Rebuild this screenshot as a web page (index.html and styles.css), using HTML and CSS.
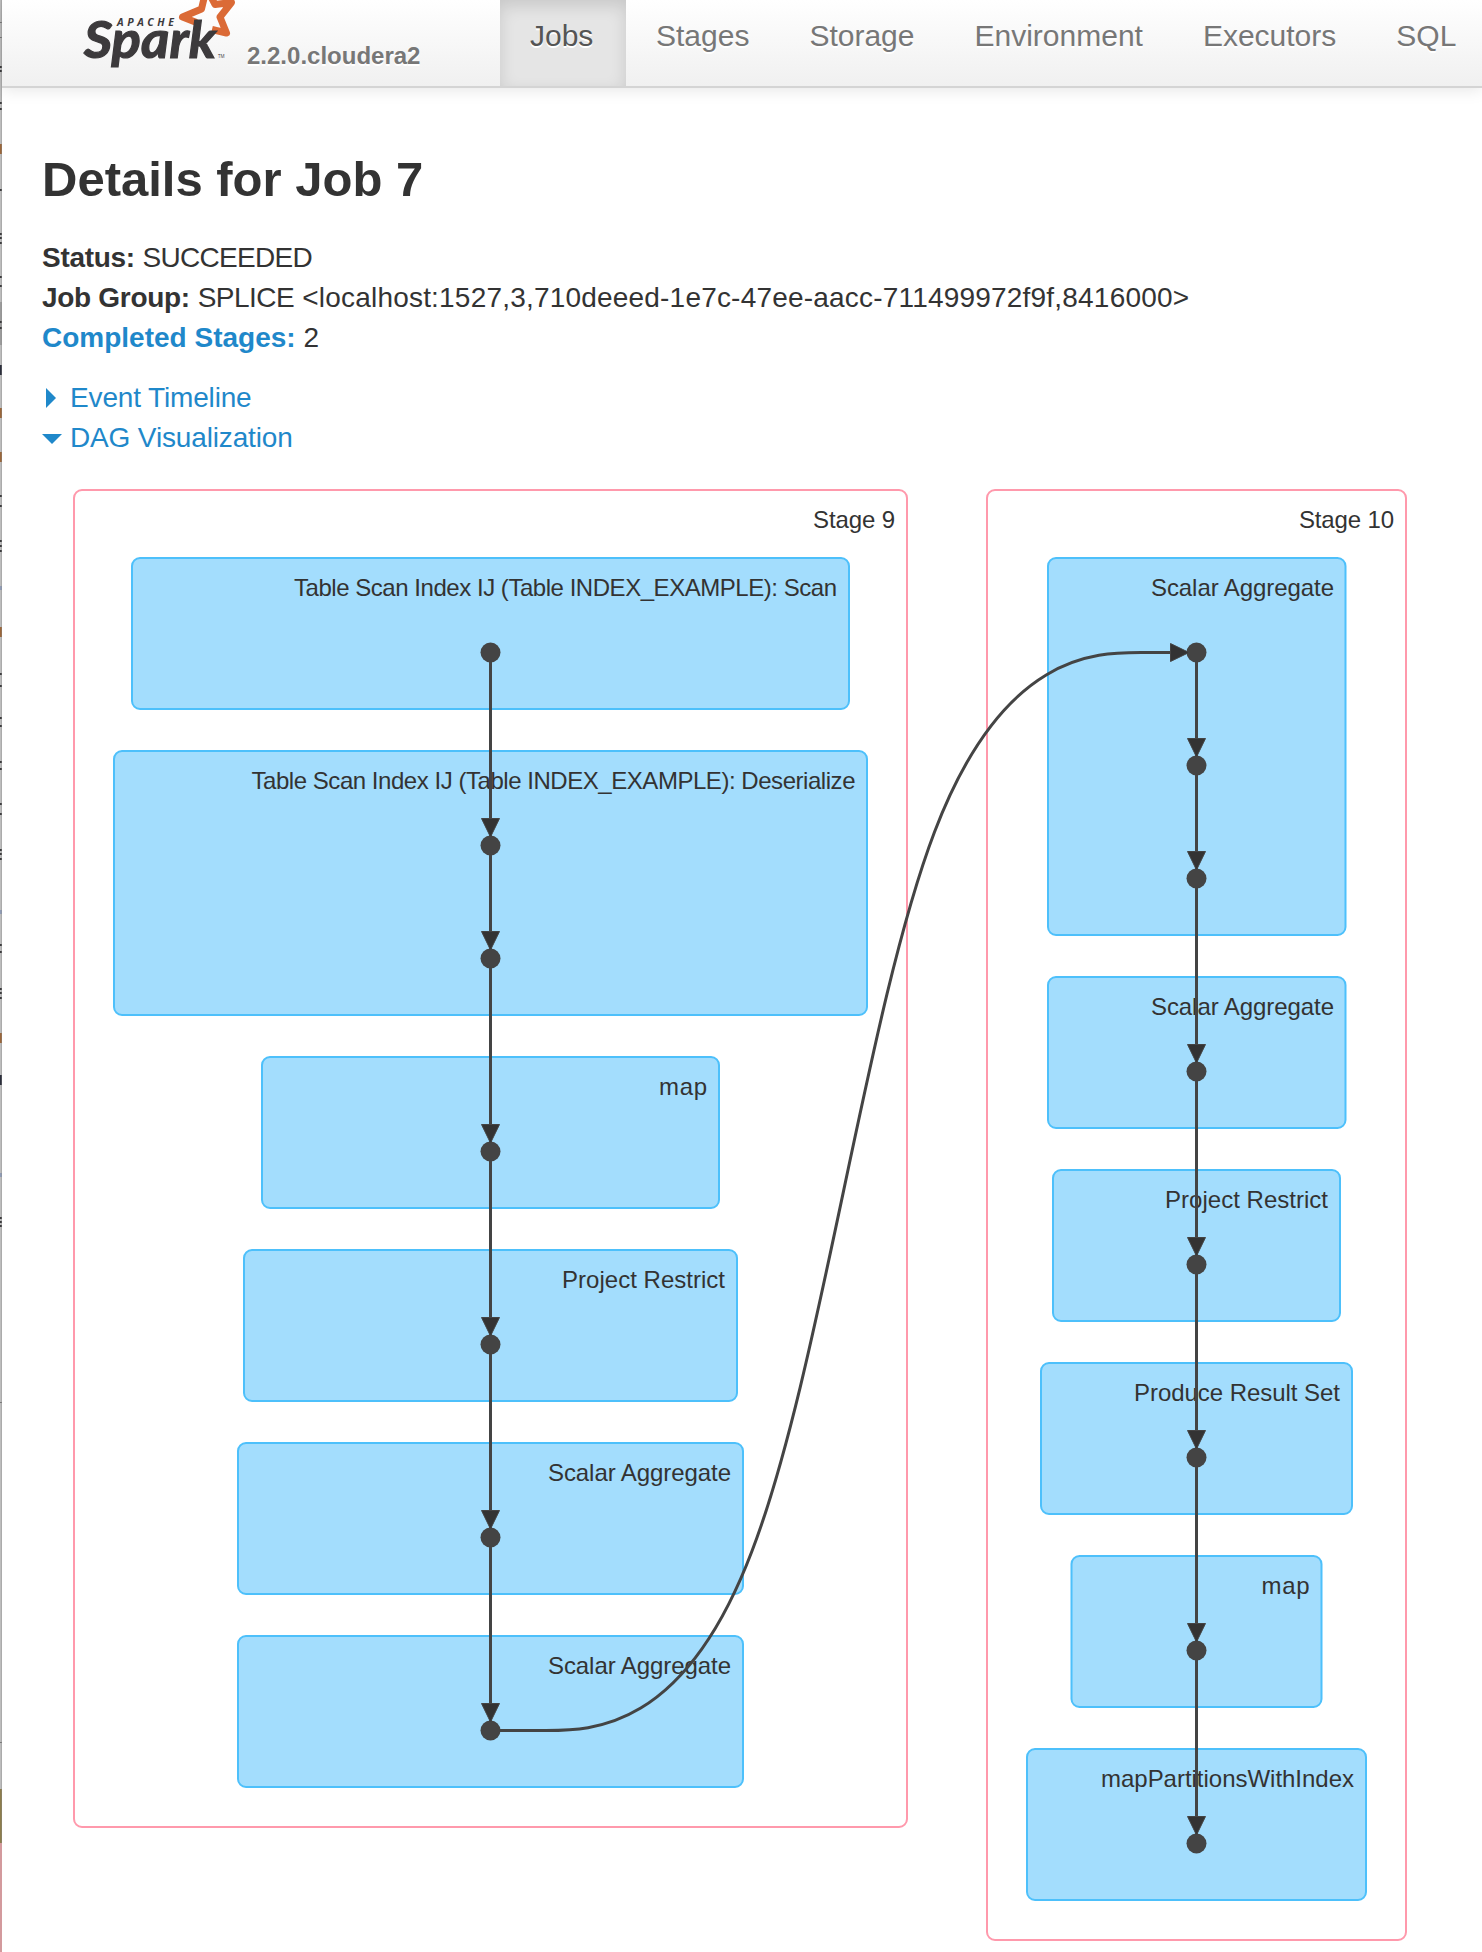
FILE: index.html
```html
<!DOCTYPE html>
<html lang="en">
<head>
<meta charset="utf-8">
<title>Details for Job 7</title>
<link rel="stylesheet" href="styles.css">
</head>
<body>
<div class="window">
  <svg class="edge" width="2" height="1952" viewBox="0 0 2 1952" aria-hidden="true">
    <rect width="2" height="1952" fill="#bdbdbd"/>
    <rect y="302" width="2" height="43" fill="#9b9b9b"/>
    <path stroke="#3c3c3e" stroke-width="2" d="M0 67h2M0 71h2M0 103h2M0 109h2M0 190h2M0 234h2M0 238h2M0 243h2M0 277h2M0 286h2M0 322h2M0 328h2M0 496h2M0 506h2M0 541h2M0 546h2M0 551h2M0 674h2M0 686h2M0 718h2M0 726h2M0 762h2M0 769h2M0 804h2M0 814h2M0 850h2M0 854h2M0 859h2M0 945h2M0 952h2M0 989h2M0 993h2M0 998h2M0 1218h2M0 1222h2M0 1226h2"/>
    <path stroke="#2c2f3c" stroke-width="10" d="M0 370h2M0 1080h2"/>
    <path stroke="#9a663a" stroke-width="10" d="M0 149h2M0 413h2M0 457h2M0 632h2M0 1038h2"/>
    <path stroke="#8f9bb5" stroke-width="4" d="M0 912h2M0 588h2M0 1175h2"/>
    <path stroke="#777" d="M0 22.500h2M0 37.500h2M0 1402.500h2M0 1742.500h2"/>
    <rect y="1789" width="2" height="54" fill="#8d7d4c"/>
    <rect y="1843" width="2" height="109" fill="#d39a9d"/>
    <rect x="1" width="1" height="1843" fill="#8a8a8a" opacity=".35"/>
  </svg>

  <div class="page">
    <header class="navbar">
      <div class="brand">
        <svg class="logo" width="160" height="72" viewBox="80 0 160 72" role="img" aria-label="Apache Spark">
          <path class="star" d="M196.500 22.500L182.500 17L201.500 9L206.500 -12L215 4.500L231.500 2.500L220 17L226.500 33L212 29.500"/>
          <text class="logo-apache" x="117" y="25.500" textLength="57">APACHE</text>
          <text class="logo-spark" x="84" y="58" textLength="132" lengthAdjust="spacingAndGlyphs">Spark</text>
          <text class="logo-tm" x="218" y="58">TM</text>
        </svg>
        <span class="version">2.2.0.cloudera2</span>
      </div>
      <nav class="tabs">
        <a class="tab active">Jobs</a>
        <a class="tab">Stages</a>
        <a class="tab">Storage</a>
        <a class="tab">Environment</a>
        <a class="tab">Executors</a>
        <a class="tab">SQL</a>
      </nav>
    </header>

    <main class="content">
      <h1>Details for Job 7</h1>
      <ul class="summary">
        <li><strong>Status:</strong> <span class="status">SUCCEEDED</span></li>
        <li><strong>Job Group:</strong> <span class="group"><span class="group-name">SPLICE</span> &lt;localhost:1527,3,710deeed-1e7c-47ee-aacc-711499972f9f,8416000&gt;</span></li>
        <li><a>Completed Stages:</a> 2</li>
      </ul>
      <div class="toggles">
        <a class="toggle"><svg width="20" height="20" viewBox="0 0 20 20"><path d="M4 0L14 10L4 20Z"/></svg>Event Timeline</a>
        <a class="toggle"><svg width="20" height="20" viewBox="0 0 20 20"><path d="M0 6H20L10 16Z"/></svg>DAG Visualization</a>
      </div>

      <svg class="dag" width="1440" height="1482" viewBox="42 470 1440 1482">
        <defs>
          <marker id="arrow" viewBox="0 0 20 20" refX="18.500" refY="10" markerWidth="20" markerHeight="20" markerUnits="userSpaceOnUse" orient="auto">
            <path d="M1 1L19.500 10L1 19Z"/>
          </marker>
        </defs>

        <g class="stage">
          <rect x="74" y="490" width="833" height="1337" rx="8"/>
          <rect x="987" y="490" width="419" height="1450" rx="8"/>
        </g>

        <g class="cluster">
          <rect x="132" y="558" width="717" height="151" rx="8"/>
          <rect x="114" y="751" width="753" height="264" rx="8"/>
          <rect x="262" y="1057" width="457" height="151" rx="8"/>
          <rect x="244" y="1250" width="493" height="151" rx="8"/>
          <rect x="238" y="1443" width="505" height="151" rx="8"/>
          <rect x="238" y="1636" width="505" height="151" rx="8"/>
          <rect x="1048" y="558" width="297.500" height="377" rx="8"/>
          <rect x="1048" y="977" width="297.500" height="151" rx="8"/>
          <rect x="1053" y="1170" width="287" height="151" rx="8"/>
          <rect x="1041" y="1363" width="311" height="151" rx="8"/>
          <rect x="1071.500" y="1556" width="250" height="151" rx="8"/>
          <rect x="1027" y="1749" width="339" height="151" rx="8"/>
        </g>

        <g class="label">
          <text x="895" y="528" textLength="82">Stage 9</text>
          <text x="1394" y="528" textLength="95">Stage 10</text>
          <text x="837" y="596" textLength="543">Table Scan Index IJ (Table INDEX_EXAMPLE): Scan</text>
          <text x="855.500" y="789" textLength="604">Table Scan Index IJ (Table INDEX_EXAMPLE): Deserialize</text>
          <text x="707" y="1095" textLength="48">map</text>
          <text x="725" y="1288" textLength="163">Project Restrict</text>
          <text x="731" y="1481" textLength="183">Scalar Aggregate</text>
          <text x="731" y="1674" textLength="183">Scalar Aggregate</text>
          <text x="1334" y="596" textLength="183">Scalar Aggregate</text>
          <text x="1334" y="1015" textLength="183">Scalar Aggregate</text>
          <text x="1328" y="1208" textLength="163">Project Restrict</text>
          <text x="1340" y="1401" textLength="206">Produce Result Set</text>
          <text x="1309.500" y="1594" textLength="48">map</text>
          <text x="1354" y="1787" textLength="253">mapPartitionsWithIndex</text>
        </g>

        <g class="node">
          <circle cx="490.500" cy="652.500" r="10"/>
          <circle cx="490.500" cy="845.500" r="10"/>
          <circle cx="490.500" cy="958.500" r="10"/>
          <circle cx="490.500" cy="1151.500" r="10"/>
          <circle cx="490.500" cy="1344.500" r="10"/>
          <circle cx="490.500" cy="1537.500" r="10"/>
          <circle cx="490.500" cy="1730.500" r="10"/>
          <circle cx="1196.500" cy="652.500" r="10"/>
          <circle cx="1196.500" cy="765.500" r="10"/>
          <circle cx="1196.500" cy="878.500" r="10"/>
          <circle cx="1196.500" cy="1071.500" r="10"/>
          <circle cx="1196.500" cy="1264.500" r="10"/>
          <circle cx="1196.500" cy="1457.500" r="10"/>
          <circle cx="1196.500" cy="1650.500" r="10"/>
          <circle cx="1196.500" cy="1843.500" r="10"/>
        </g>

        <g class="edge-path">
          <path d="M490.500 662V836"/>
          <path d="M490.500 855V949"/>
          <path d="M490.500 968V1142"/>
          <path d="M490.500 1161V1335"/>
          <path d="M490.500 1354V1528"/>
          <path d="M490.500 1547V1721"/>
          <path d="M1196.500 662V756"/>
          <path d="M1196.500 775V869"/>
          <path d="M1196.500 888V1062"/>
          <path d="M1196.500 1081V1255"/>
          <path d="M1196.500 1274V1448"/>
          <path d="M1196.500 1467V1641"/>
          <path d="M1196.500 1660V1834"/>
          <path d="M500 1730.500L546 1730.500C592 1730.500 684 1730.500 752 1551C821 1371 866 1012 934.500 832C1003 652.500 1095 652.500 1141 652.500L1188 652.500"/>
        </g>
      </svg>
    </main>
  </div>
</div>
</body>
</html>
```
FILE: styles.css
```css
* { box-sizing: border-box; }

body {
  margin: 0;
  background: #fff;
  color: #333;
  font: 28px/40px "Liberation Sans", Arial, sans-serif;
}

.window {
  display: grid;
  grid-template-columns: 2px 1480px;
  height: 1952px;
  overflow: hidden;
}

.edge { display: block; }
.page { min-width: 0; }

.navbar {
  display: flex;
  height: 88px;
  background: linear-gradient(#fff, #f0f0f0);
  border-bottom: 2px solid #d4d4d4;
  box-shadow: 0 2px 15px rgba(0, 0, 0, 0.1);
  color: #777;
  text-shadow: 0 2px 0 #fff;
}

.brand {
  display: flex;
  flex: none;
  width: 498px;
  padding-left: 78px;
  gap: 7px;
}

.logo { display: block; flex: none; text-shadow: none; }
.star { fill: none; stroke: #db6a36; stroke-width: 7; stroke-linejoin: round; }
.logo text { fill: #3c3a3c; }
.logo-spark { font: italic 700 51px Lato, sans-serif; stroke: #3c3a3c; stroke-width: 1.2; }
.logo-apache { font: italic 700 10.5px "Open Sans", sans-serif; }
.logo-tm { font: 4.5px "Open Sans", sans-serif; }

.version {
  padding-top: 36px;
  font-size: 24px;
  font-weight: 700;
}

.tabs { display: flex; flex: none; }
.tab {
  padding: 16px 30px 0;
  font-size: 30px;
  white-space: nowrap;
}
.active {
  width: 126px;
  background: #e5e5e5;
  box-shadow: inset 0 6px 16px rgba(0, 0, 0, 0.125);
  color: #555;
}

.content { padding: 51px 0 0 40px; }

h1 {
  margin: 0;
  font-size: 49px;
  line-height: 80px;
}

.summary {
  margin: 0;
  padding: 19px 0 20px;
  list-style: none;
}
.summary strong { letter-spacing: -0.3px; }
.summary a { font-weight: 700; }
.status { letter-spacing: -0.7px; }
.group { letter-spacing: 0.2px; }
.group-name { letter-spacing: -0.5px; }

.summary a, .toggle { color: #1f88ca; }

.toggles { display: flex; flex-direction: column; }
.toggle {
  display: flex;
  align-items: center;
  gap: 8px;
  letter-spacing: -0.15px;
}
.toggle svg { fill: #1f88ca; }

.dag { display: block; margin-top: 12px; }
.stage rect { fill: none; stroke: #ff99ac; stroke-width: 2; }
.cluster rect { fill: #a3ddfd; stroke: #4dc0fb; stroke-width: 2; }
.label { fill: #333; font-size: 24px; text-anchor: end; }
.node circle { fill: #444; }
.edge-path path { fill: none; stroke: #444; stroke-width: 3; marker-end: url(#arrow); }
marker path { fill: #333; stroke: #444; stroke-width: 1; }
```
